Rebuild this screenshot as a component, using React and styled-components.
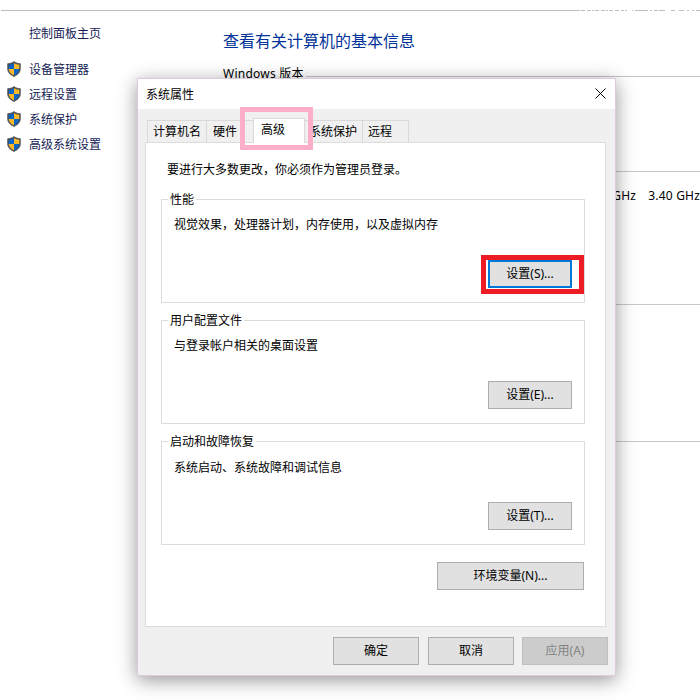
/** @format */

import React from "react";
import styled, { createGlobalStyle, css } from "styled-components";

const links = ["设备管理器", "远程设置", "系统保护", "高级系统设置"];

const tabs = [
  { label: "计算机名", width: 60, pad: 5 },
  { label: "硬件", width: 46, pad: 6 },
  { label: "高级", width: 52, pad: 7, active: true },
  { label: "系统保护", width: 58, pad: 4 },
  { label: "远程", width: 46, pad: 5 },
];

const groups = [
  {
    title: "性能",
    text: "视觉效果，处理器计划，内存使用，以及虚拟内存",
    button: "设置(S)...",
    focused: true,
  },
  {
    title: "用户配置文件",
    text: "与登录帐户相关的桌面设置",
    button: "设置(E)...",
  },
  {
    title: "启动和故障恢复",
    text: "系统启动、系统故障和调试信息",
    button: "设置(T)...",
  },
];

const ShieldIcon = () => (
  <svg width="14" height="16" viewBox="0 0 14 16">
    <path
      d="M7 .6C5.300 2 3.200 2.600.7 2.700v5.100c0 3.600 2.500 6 6.300 7.600 3.800-1.600 6.300-4 6.300-7.600V2.700C10.800 2.600 8.700 2 7 .6z"
      fill="#4b4f52"
      stroke="#4b4f52"
      strokeWidth=".8"
    />
    <path d="M7 1.900C5.500 3 3.800 3.500 1.700 3.700V8H7z" fill="#0b66c8" />
    <path d="M7 1.900C8.500 3 10.200 3.500 12.300 3.700V8H7z" fill="#fdb827" />
    <path d="M7 14.300C3.900 12.900 1.900 11 1.700 8H7z" fill="#fdb827" />
    <path d="M7 14.300c3.100-1.400 5.100-3.300 5.300-6.300H7z" fill="#0b66c8" />
  </svg>
);

const CloseIcon = () => (
  <svg width="11" height="11" viewBox="0 0 11 11">
    <path d="M.5.5l10 10M10.500.5l-10 10" stroke="#000" strokeWidth="1" />
  </svg>
);

const TopRule = () => (
  <svg width="699" height="1" viewBox="1 0 699 1" shapeRendering="crispEdges">
    <path
      d="M1 .5H579.500M581 .5h4M587 .5h4M592 .5h1.500M595 .5h4M601 .5h4M606 .5h1.500M609 .5h4M615 .5h4M621 .5h3M625 .5h2M632 .5h1M635 .5h13M650 .5h2M654 .5h4M659 .5h6M671 .5h4M679 .5h5M687 .5h2M692 .5h2M696 .5h4"
      stroke="#bfbfbf"
    />
  </svg>
);

const App = () => {
  return (
    <>
      <GlobalStyle />
      <Screen>
        <TopRule />
        <Columns>
          <Sidebar>
            <HomeLink>控制面板主页</HomeLink>
            {links.map((link) => (
              <SideLink key={link}>
                <ShieldIcon />
                {link}
              </SideLink>
            ))}
          </Sidebar>
          <Main>
            <Heading>查看有关计算机的基本信息</Heading>
            <SectionTitle>
              <span>Windows 版本</span>
            </SectionTitle>
            <Section $height={95} />
            <Section $height={133}>
              <Spec>
                <span>GHz</span>
                <span>3.40 GHz</span>
              </Spec>
            </Section>
            <Section $height={137} />
          </Main>
        </Columns>

        <Dialog>
          <TitleBar>
            <span>系统属性</span>
            <CloseIcon />
          </TitleBar>
          <Body>
            <TabRow>
              {tabs.map((tab) => (
                <Tab
                  key={tab.label}
                  $width={tab.width}
                  $pad={tab.pad}
                  $active={tab.active}
                >
                  {tab.label}
                  {tab.active && <TabHighlight />}
                </Tab>
              ))}
            </TabRow>
            <Panel>
              <Notice>要进行大多数更改，你必须作为管理员登录。</Notice>
              {groups.map((group) => (
                <Group key={group.title}>
                  <GroupTitle>{group.title}</GroupTitle>
                  <GroupText>{group.text}</GroupText>
                  <Button $width={84} $focused={group.focused}>
                    {group.button}
                    {group.focused && <ButtonHighlight />}
                  </Button>
                </Group>
              ))}
              <EnvRow>
                <Button $width={147}>环境变量(N)...</Button>
              </EnvRow>
            </Panel>
            <Footer>
              <Button $width={86}>确定</Button>
              <Button $width={86}>取消</Button>
              <ApplyButton $width={86} disabled>
                应用(A)
              </ApplyButton>
            </Footer>
          </Body>
        </Dialog>
      </Screen>
    </>
  );
};

export default App;

// Styled Components

const GlobalStyle = createGlobalStyle`
  * {
    box-sizing: border-box;
  }

  body {
    margin: 0;
    background: #fff;
    font-family: "Noto Sans", "Noto Sans CJK SC", sans-serif;
    font-size: 12px;
    line-height: 16px;
    color: #000;
  }

  svg {
    display: block;
    flex-shrink: 0;
  }
`;

const Screen = styled.div`
  position: relative;
  width: 700px;
  height: 700px;
  padding: 10px 0 0 1px;
  overflow: hidden;
`;

const Columns = styled.div`
  display: grid;
  grid-template-columns: 222px 1fr;
`;

const Sidebar = styled.nav`
  display: flex;
  flex-direction: column;
  padding: 15px 0 0 6px;
  color: #151c55;
`;

const HomeLink = styled.div`
  height: 31px;
  padding-left: 22px;
`;

const SideLink = styled.div`
  display: flex;
  align-items: center;
  gap: 8px;
  height: 25px;

  svg {
    margin-top: -2px;
  }
`;

const Main = styled.main`
  display: flex;
  flex-direction: column;
  padding-top: 18px;
`;

const Heading = styled.h1`
  margin: 0 0 12px;
  font-size: 16px;
  font-weight: 400;
  line-height: 24px;
  color: #003399;
`;

const SectionTitle = styled.div`
  display: flex;
  gap: 2px;
  height: 12px;
  line-height: 18px;
  letter-spacing: 0.25px;
  white-space: nowrap;

  &::after {
    content: "";
    flex: 1;
    height: 1px;
    margin-top: 11px;
    background: #c3c3c3;
  }
`;

const Section = styled.section`
  height: ${({ $height }) => $height}px;
  border-bottom: 1px solid #c9c9c9;
`;

const Spec = styled.div`
  display: flex;
  justify-content: flex-end;
  gap: 12px;
  padding-top: 16px;
  letter-spacing: 0.2px;
`;

const Dialog = styled.div`
  position: absolute;
  top: 78px;
  left: 137px;
  width: 479px;
  height: 598px;
  border: 1px solid #dccbdc;
  background: #f0f0f0;
  box-shadow: 0 4px 18px rgba(0, 0, 0, 0.42);
`;

const TitleBar = styled.div`
  display: flex;
  align-items: center;
  justify-content: space-between;
  height: 30px;
  padding: 0 9px 0 8px;
  background: #fff;

  span {
    padding-top: 2px;
  }

  svg {
    margin-top: -2px;
  }
`;

const Body = styled.div`
  padding: 9px 7px 0;
`;

const TabRow = styled.div`
  display: flex;
  align-items: flex-end;
  height: 24px;
  padding-left: 2px;
`;

const Tab = styled.div`
  width: ${({ $width }) => $width}px;
  height: 22px;
  padding: 3px 0 0 ${({ $pad }) => $pad}px;
  border-top: 1px solid #d9d9d9;
  border-right: 1px solid #d9d9d9;
  white-space: nowrap;

  &:first-child {
    border-left: 1px solid #d9d9d9;
  }

  &:nth-child(2) {
    border-right: none;
  }

  ${({ $active }) =>
    $active &&
    css`
      position: relative;
      height: 25px;
      margin-bottom: -1px;
      border-left: 1px solid #d9d9d9;
      background: #fff;
    `}
`;

const TabHighlight = styled.span`
  position: absolute;
  z-index: 1;
  top: -12px;
  left: -14px;
  width: 73px;
  height: 43px;
  border: 5px solid #ffaec9;
`;

const Panel = styled.div`
  width: 461px;
  height: 485px;
  padding: 19px 21px 0 15px;
  border: 1px solid #dcdcdc;
  background: #fff;
`;

const Notice = styled.p`
  height: 37px;
  margin: 0;
  padding-left: 6px;
`;

const Group = styled.section`
  display: flex;
  flex-direction: column;
  align-items: flex-start;
  width: 424px;
  height: 104px;
  margin-bottom: 17px;
  padding: 0 12px 14px 6px;
  border: 1px solid #dcdcdc;

  > button {
    align-self: flex-end;
    margin-top: auto;
  }
`;

const GroupTitle = styled.div`
  height: 16px;
  margin-top: -8px;
  padding: 0 2px;
  background: #fff;
`;

const GroupText = styled.div`
  padding: 9px 0 0 6px;

  ${Group}:nth-of-type(3) & {
    padding-top: 10px;
  }
`;

const Button = styled.button`
  position: relative;
  width: ${({ $width }) => $width}px;
  height: 28px;
  padding: 0;
  border: ${({ $focused }) =>
    $focused ? "2px solid #0078d7" : "1px solid #adadad"};
  background: #e1e1e1;
  color: #000;
  font: inherit;
`;

const ApplyButton = styled(Button)`
  border-color: #bfbfbf;
  background: #cccccc;
  color: #838383;
`;

const ButtonHighlight = styled.span`
  position: absolute;
  top: -7px;
  left: -9px;
  width: 103px;
  height: 39px;
  border: 5px solid #ed1c24;
`;

const EnvRow = styled.div`
  display: flex;
  justify-content: flex-end;
`;

const Footer = styled.div`
  display: flex;
  justify-content: flex-end;
  gap: 9px;
  padding-top: 10px;

  button:last-child {
    margin-left: -1px;
  }
`;
